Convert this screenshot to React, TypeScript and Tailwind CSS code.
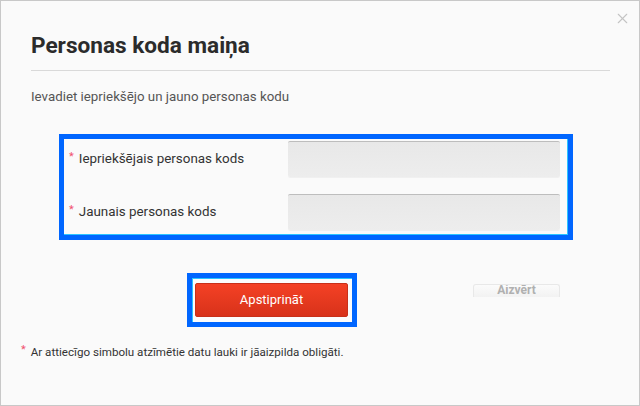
import { X } from 'lucide-react';

const font = { fontFamily: 'Roboto, "Liberation Sans", sans-serif' };

export default function App() {
  return (
    <div
      style={font}
      className="relative w-[640px] h-[406px] border border-[#c8c8c8] bg-[#fafafa] text-[#333] overflow-hidden"
    >
      {/* close */}
      <button className="absolute top-[9px] right-[8px] text-[#c4c4c4]">
        <X className="w-[17px] h-[17px]" strokeWidth={1.6} />
      </button>

      <div className="pl-[30px] pr-[29px] pt-[31px]">
        <h1 className="text-[22.6px] leading-[28px] font-bold text-[#2b2b2b]">
          Personas koda maiņa
        </h1>
        <div className="mt-[10px] h-px bg-[#d9d9d9]" />
        <p className="mt-[18px] text-[13.3px] leading-[16px] text-[#555]">
          Ievadiet iepriekšējo un jauno personas kodu
        </p>
      </div>

      {/* fields */}
      <div className="ml-[58px] mt-[29px] w-[514px] border-[5px] border-[#0066ff]">
        <div className="border-r border-b border-[#2cc4ff] pt-[2px] pb-[4px] pr-[7px] flex flex-col gap-[17px]">
          <div className="flex items-center">
            <div className="flex-1 flex items-center pl-[5px] text-[13.4px]">
              <span className="text-[#f0506e] text-[11px] mr-[5px] -mt-[4px]">*</span>
              <span>Iepriekšējais personas kods</span>
            </div>
            <div className="w-[272px] h-[36px] rounded-[2px] border-t border-[#bdbdbd] bg-gradient-to-b from-[#e8e8e8] to-[#ededed] shadow-[0_1px_0_#f0f0f0]" />
          </div>
          <div className="flex items-center">
            <div className="flex-1 flex items-center pl-[5px] text-[13.4px]">
              <span className="text-[#f0506e] text-[11px] mr-[5px] -mt-[4px]">*</span>
              <span>Jaunais personas kods</span>
            </div>
            <div className="w-[272px] h-[36px] rounded-[2px] border-t border-[#bdbdbd] bg-gradient-to-b from-[#e8e8e8] to-[#ededed] shadow-[0_1px_0_#f0f0f0]" />
          </div>
        </div>
      </div>

      {/* actions */}
      <div className="flex items-start mt-[33px]">
        <div className="ml-[186px] border-[5px] border-[#0066ff]">
          <div className="border-t border-l border-[#2cc4ff] bg-[#fcfcfc] pt-[4px] pb-[5px] pl-[2px] pr-[4px]">
            <button className="w-[153px] h-[34px] rounded-[2px] border border-[#c8301a] bg-gradient-to-b from-[#f44125] to-[#d8321a] text-white text-[13px]">
              Apstiprināt
            </button>
          </div>
        </div>
        <div className="ml-[116px] mt-[11px] w-[87px] h-[13px] overflow-hidden rounded-t-[3px] border border-b-0 border-[#e8e8e8] bg-gradient-to-b from-[#fbfbfb] to-[#f2f2f2] text-center">
          <span className="block text-[12px] leading-[14px] font-bold text-[#b0b0b0] -mt-[2px]">Aizvērt</span>
        </div>
      </div>

      {/* footer */}
      <div className="flex items-center pl-[20px] mt-[17px] text-[11.6px] text-[#333]">
        <span className="text-[#f0506e] text-[11px] mr-[5px] -mt-[4px]">*</span>
        <span>Ar attiecīgo simbolu atzīmētie datu lauki ir jāaizpilda obligāti.</span>
      </div>
    </div>
  );
}
